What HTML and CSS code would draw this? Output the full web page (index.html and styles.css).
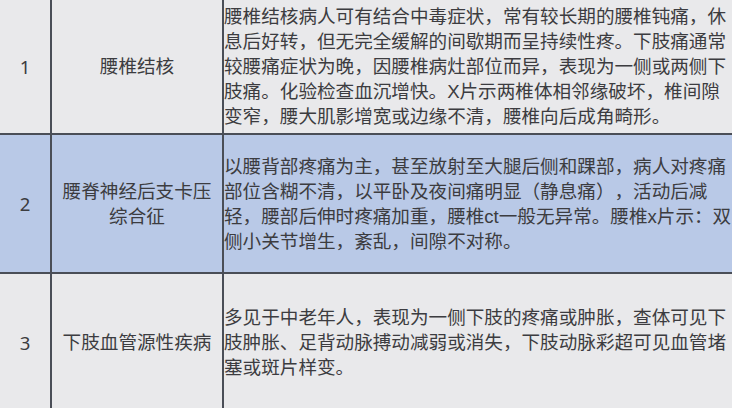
FILE: index.html
```html
<!DOCTYPE html>
<html lang="zh-CN">
<head>
<meta charset="utf-8">
<link rel="stylesheet" href="styles.css">
</head>
<body>
<table class="dx">
  <colgroup>
    <col class="c-num">
    <col class="c-name">
    <col class="c-desc">
  </colgroup>
  <tbody>
    <tr class="row grey r1">
      <td class="num">1</td>
      <td class="name">腰椎结核</td>
      <td class="desc">腰椎结核病人可有结合中毒症状，常有较长期的腰椎钝痛，休息后好转，但无完全缓解的间歇期而呈持续性疼。下肢痛通常较腰痛症状为晚，因腰椎病灶部位而异，表现为一侧或两侧下肢痛。化验检查血沉增快。X片示两椎体相邻缘破坏，椎间隙变窄，腰大肌影增宽或边缘不清，腰椎向后成角畸形。</td>
    </tr>
    <tr class="row blue r2">
      <td class="num">2</td>
      <td class="name">腰脊神经后支卡压综合征</td>
      <td class="desc">以腰背部疼痛为主，甚至放射至大腿后侧和踝部，病人对疼痛部位含糊不清，以平卧及夜间痛明显（静息痛），活动后减轻，腰部后伸时疼痛加重，腰椎ct一般无异常。腰椎x片示：双侧小关节增生，紊乱，间隙不对称。</td>
    </tr>
    <tr class="row grey r3">
      <td class="num">3</td>
      <td class="name">下肢血管源性疾病</td>
      <td class="desc">多见于中老年人，表现为一侧下肢的疼痛或肿胀，查体可见下肢肿胀、足背动脉搏动减弱或消失，下肢动脉彩超可见血管堵塞或斑片样变。</td>
    </tr>
  </tbody>
</table>
</body>
</html>
```

FILE: styles.css
```css
html, body {
  margin: 0;
  padding: 0;
  background: #e9e9eb;
  overflow: hidden;
}

.dx {
  border-collapse: collapse;
  table-layout: fixed;
  width: 732px;
  font-family: "Liberation Sans", "Noto Sans CJK SC", sans-serif;
  font-size: 18.6px;
  line-height: 25px;
  color: #3c3c40;
  text-spacing-trim: space-all;
}

.c-num { width: 51px; }
.c-name { width: 172px; }
.c-desc { width: 509px; }

.dx td {
  border: 2px solid #4a4e57;
  vertical-align: middle;
  padding: 0;
}

.dx .r1 td { border-top: none; }
.dx td:first-child { border-left: none; }
.dx td:last-child { border-right: none; }

.grey { background: #e9e9eb; }
.blue { background: #b9c9e7; }

.r1 { height: 134px; }
.r2 { height: 139px; }
.r3 { height: 138px; }

.dx .num {
  text-align: center;
  font-family: "Noto Sans", "Noto Sans CJK SC", sans-serif;
}

.dx .name {
  text-align: center;
  padding: 0 8px;
}

.dx .desc {
  text-align: left;
  padding: 0;
}
```
